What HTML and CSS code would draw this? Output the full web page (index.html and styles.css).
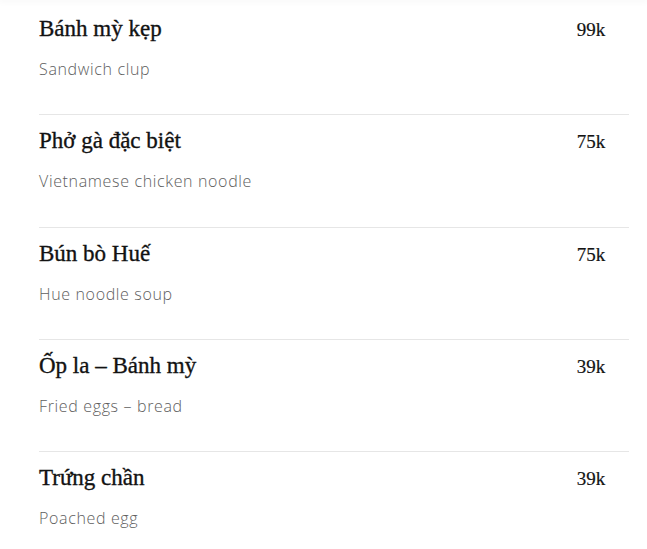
FILE: index.html
```html
<!DOCTYPE html>
<html lang="vi">
<head>
<meta charset="utf-8">
<link rel="stylesheet" href="styles.css">
</head>
<body>
<div class="topbar"></div>
<ul class="menu">
  <li class="item">
    <div class="row"><h3 class="name">Bánh mỳ kẹp</h3><span class="price">99k</span></div>
    <p class="desc">Sandwich clup</p>
  </li>
  <li class="item">
    <div class="row"><h3 class="name">Phở gà đặc biệt</h3><span class="price">75k</span></div>
    <p class="desc">Vietnamese chicken noodle</p>
  </li>
  <li class="item">
    <div class="row"><h3 class="name">Bún bò Huế</h3><span class="price">75k</span></div>
    <p class="desc">Hue noodle soup</p>
  </li>
  <li class="item">
    <div class="row"><h3 class="name">Ốp la – Bánh mỳ</h3><span class="price">39k</span></div>
    <p class="desc">Fried eggs – bread</p>
  </li>
  <li class="item">
    <div class="row"><h3 class="name">Trứng chần</h3><span class="price">39k</span></div>
    <p class="desc">Poached egg</p>
  </li>
</ul>
</body>
</html>
```
FILE: styles.css
```css
html, body {
  margin: 0;
  padding: 0;
  background: #ffffff;
}
body {
  width: 647px;
  height: 549px;
  overflow: hidden;
}
.topbar {
  height: 0;
  box-shadow: 0 0 6px 1px rgba(0, 0, 0, 0.08);
}
.menu {
  list-style: none;
  margin: 0;
  padding: 3px 18px 0 39px;
}
.item {
  height: 111.33px;
  border-bottom: 1px solid #e6e6e6;
}
.row {
  display: flex;
  align-items: baseline;
  justify-content: space-between;
  padding-top: 10px;
}
.name {
  margin: 0;
  font-family: "Liberation Serif", "DejaVu Serif", serif;
  font-weight: 400;
  font-size: 23px;
  line-height: 32px;
  color: #121212;
  -webkit-text-stroke: 0.35px #121212;
}
.price {
  width: 76px;
  text-align: center;
  font-family: "Liberation Serif", "DejaVu Serif", serif;
  font-size: 19px;
  line-height: 32px;
  color: #141414;
  -webkit-text-stroke: 0.2px #141414;
}
.desc {
  margin: 12px 0 0;
  font-family: "Open Sans", sans-serif;
  font-weight: 300;
  font-size: 16px;
  line-height: 22px;
  letter-spacing: 0.65px;
  color: #5e5e5e;
}
```
